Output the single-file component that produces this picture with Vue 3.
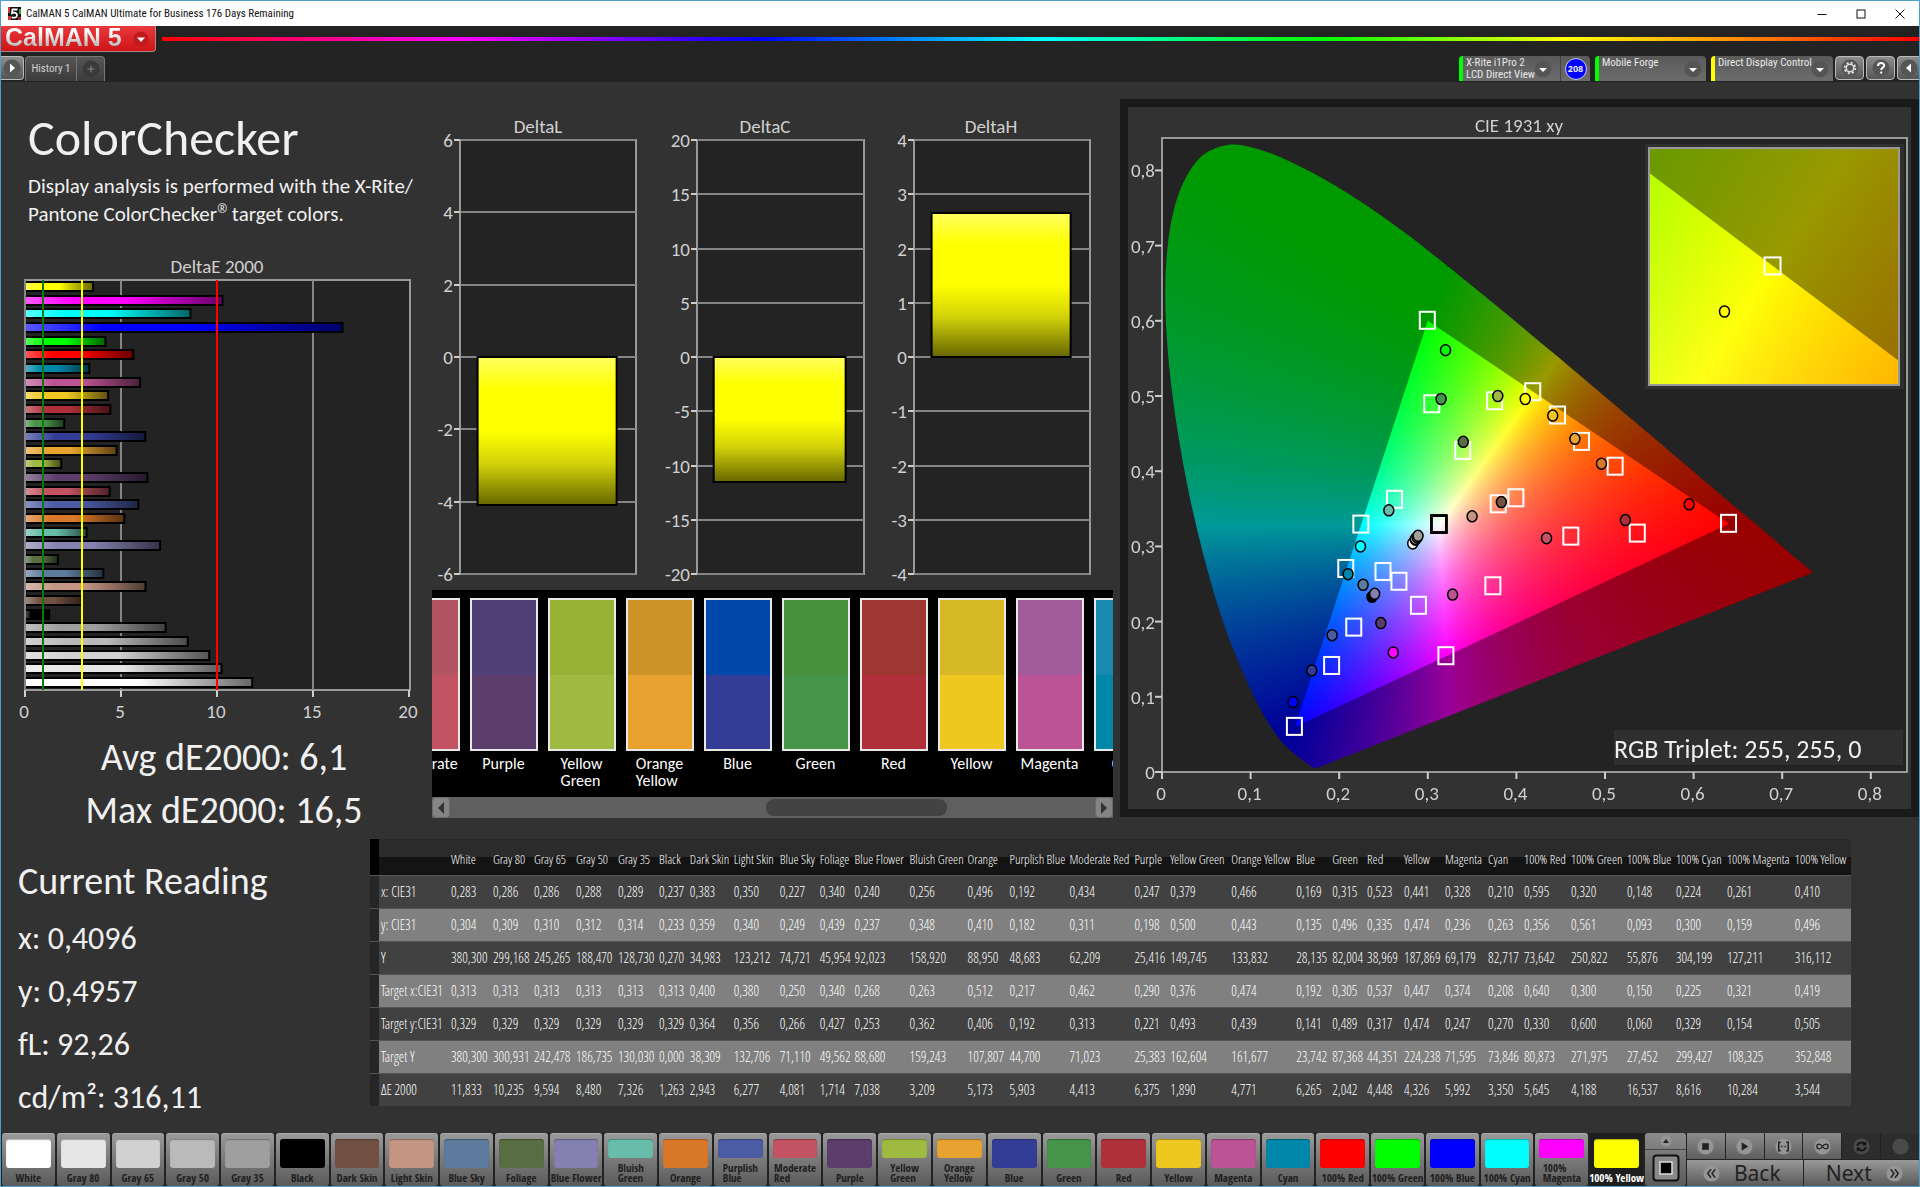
<script setup>
import { ref, onMounted } from 'vue'

const patches = [
  { name: 'White', color: '#ffffff', v: '0,283 0,304 380,300 0,313 0,329 380,300 11,833', w: 42 },
  { name: 'Gray 80', color: '#e6e6e6', v: '0,286 0,309 299,168 0,313 0,329 300,931 10,235', w: 41 },
  { name: 'Gray 65', color: '#d1d1d1', v: '0,286 0,310 245,265 0,313 0,329 242,478 9,594', w: 42 },
  { name: 'Gray 50', color: '#bababa', v: '0,288 0,312 188,470 0,313 0,329 186,735 8,480', w: 42 },
  { name: 'Gray 35', color: '#9f9f9f', v: '0,289 0,314 128,730 0,313 0,329 130,030 7,326', w: 41 },
  { name: 'Black', color: '#000000', v: '0,237 0,233 0,270 0,313 0,329 0,000 1,263', w: 31 },
  { name: 'Dark Skin', color: '#725143', v: '0,383 0,359 34,983 0,400 0,364 38,309 2,943', w: 44 },
  { name: 'Light Skin', color: '#c39582', v: '0,350 0,340 123,212 0,380 0,356 132,706 6,277', w: 46 },
  { name: 'Blue Sky', color: '#5d7b9d', v: '0,227 0,249 74,721 0,250 0,266 71,110 4,081', w: 40 },
  { name: 'Foliage', color: '#586d42', v: '0,340 0,439 45,954 0,340 0,427 49,562 1,714', w: 35 },
  { name: 'Blue Flower', color: '#8480b0', v: '0,240 0,237 92,023 0,268 0,253 88,680 7,038', w: 55 },
  { name: 'Bluish Green', color: '#67bdaa', v: '0,256 0,348 158,920 0,263 0,362 159,243 3,209', w: 58, two: true },
  { name: 'Orange', color: '#d97829', v: '0,496 0,410 88,950 0,512 0,406 107,807 5,173', w: 42 },
  { name: 'Purplish Blue', color: '#4b5ba4', v: '0,192 0,182 48,683 0,217 0,192 44,700 5,903', w: 60, two: true },
  { name: 'Moderate Red', color: '#c35362', v: '0,434 0,311 62,209 0,462 0,313 71,023 4,413', w: 65, two: true },
  { name: 'Purple', color: '#5d3d6b', v: '0,247 0,198 25,416 0,290 0,221 25,383 6,375', w: 36 },
  { name: 'Yellow Green', color: '#9fba40', v: '0,379 0,500 149,745 0,376 0,493 162,604 1,890', w: 61, two: true },
  { name: 'Orange Yellow', color: '#e7a22f', v: '0,466 0,443 133,832 0,474 0,439 161,677 4,771', w: 65, two: true },
  { name: 'Blue', color: '#343d96', v: '0,169 0,135 28,135 0,192 0,141 23,742 6,265', w: 36 },
  { name: 'Green', color: '#469449', v: '0,315 0,496 82,004 0,305 0,489 87,368 2,042', w: 35 },
  { name: 'Red', color: '#b03039', v: '0,523 0,335 38,969 0,537 0,317 44,351 4,448', w: 37 },
  { name: 'Yellow', color: '#eec821', v: '0,441 0,474 187,869 0,447 0,474 224,238 4,326', w: 41 },
  { name: 'Magenta', color: '#bb5395', v: '0,328 0,236 69,179 0,374 0,247 71,595 5,992', w: 43 },
  { name: 'Cyan', color: '#0086a8', v: '0,210 0,263 82,717 0,208 0,270 73,846 3,350', w: 36 },
  { name: '100% Red', color: '#ff0000', v: '0,595 0,356 73,642 0,640 0,330 80,873 5,645', w: 47 },
  { name: '100% Green', color: '#00ff00', v: '0,320 0,561 250,822 0,300 0,600 271,975 4,188', w: 56 },
  { name: '100% Blue', color: '#0000ff', v: '0,148 0,093 55,876 0,150 0,060 27,452 16,537', w: 49 },
  { name: '100% Cyan', color: '#00ffff', v: '0,224 0,300 304,199 0,225 0,329 299,427 8,616', w: 51 },
  { name: '100% Magenta', color: '#ff00ff', v: '0,261 0,159 127,211 0,321 0,154 108,325 10,284', w: 68, two: true },
  { name: '100% Yellow', color: '#ffff00', v: '0,410 0,496 316,112 0,419 0,505 352,848 3,544', w: 58 },
].map((p) => {
  const cells = p.v.split(' ')
  const n = cells.map((c) => Number(c.replace(',', '.')))
  return { ...p, cells, x: n[0], y: n[1], tx: n[3], ty: n[4], de: n[6] }
})

const rowNames = ['x: CIE31', 'y: CIE31', 'Y', 'Target x:CIE31', 'Target y:CIE31', 'Target Y', 'ΔE 2000']
const broken = (p) => (p.two ? p.name.replace(' ', '\n') : p.name)

/* DeltaE 2000 chart */
const deX = (v) => 24 + v * 19.2
const deBars = [...patches].reverse().map((p, i) => ({
  color: p.color,
  y: Math.round(32 + i * 13.65),
  w: p.de * 19.2,
}))

/* DeltaL, DeltaC and DeltaH charts */
const columns = [
  { title: 'DeltaL', cx: 107, x: 29, w: 176, max: 6, step: 2, value: -4.1 },
  { title: 'DeltaC', cx: 334, x: 266, w: 167, max: 20, step: 5, value: -11.5 },
  { title: 'DeltaH', cx: 560, x: 483, w: 176, max: 4, step: 1, value: 2.66 },
].map((c) => {
  const yOf = (v) => Math.round(275 - (v / c.max) * 217)
  const ticks = []
  for (let v = c.max; v >= -c.max; v -= c.step) ticks.push({ v, y: yOf(v) })
  const top = Math.min(yOf(c.value), yOf(0))
  return { ...c, ticks, top, h: Math.abs(yOf(c.value) - yOf(0)), bx: c.x + c.w * 0.1, bw: c.w * 0.79 }
})

const comparison = [
  ['Moderate\nRed', '#b05561', '#c35362'],
  ['Purple', '#504077', '#5d3d6b'],
  ['Yellow\nGreen', '#98b235', '#9fba40'],
  ['Orange\nYellow', '#cc9429', '#e7a22f'],
  ['Blue', '#0049ab', '#343d96'],
  ['Green', '#4a913e', '#469449'],
  ['Red', '#9e3632', '#b03039'],
  ['Yellow', '#d7b825', '#eec821'],
  ['Magenta', '#a25c9b', '#bb5395'],
  ['Cyan', '#1a89b0', '#0086a8'],
]

/* CIE 1931 diagram */
const W = 783
const H = 702
const px = (x) => 34 + x * 886
const py = (y) => 665 - y * 752
const ix = (x) => 645 + (x - 0.4193) * 5000
const iy = (y) => 159 - (y - 0.5053) * 4740
const cieTicks = [0, 1, 2, 3, 4, 5, 6, 7, 8].map((n) => ({ v: n / 10, t: n ? '0,' + n : '0' }))
const locus = [
  [0.1741, 0.005], [0.1726, 0.0048], [0.1689, 0.0069], [0.1644, 0.0109], [0.1566, 0.0177], [0.144, 0.0297],
  [0.1355, 0.0399], [0.1241, 0.0578], [0.1096, 0.0868], [0.0913, 0.1327], [0.0687, 0.2007], [0.0454, 0.295],
  [0.0235, 0.4127], [0.0082, 0.5384], [0.0039, 0.6548], [0.0139, 0.7502], [0.0389, 0.812], [0.0743, 0.8338],
  [0.1142, 0.8262], [0.1547, 0.8059], [0.1929, 0.7816], [0.2296, 0.7543], [0.2658, 0.7243], [0.3016, 0.6923],
  [0.3731, 0.6245], [0.4441, 0.5547], [0.5125, 0.4866], [0.5752, 0.4242], [0.627, 0.3725], [0.6658, 0.334],
  [0.6915, 0.3083], [0.719, 0.2809], [0.7347, 0.2653],
]
const gamut = [[0.64, 0.33], [0.3, 0.6], [0.15, 0.06]]
const canvas = ref(null)

function chroma(x, y, level) {
  const z = 1 - x - y
  const rgb = [
    3.2406 * x - 1.5372 * y - 0.4986 * z,
    -0.9689 * x + 1.8758 * y + 0.0415 * z,
    0.0557 * x - 0.204 * y + 1.057 * z,
  ].map((c) => Math.max(0, c))
  const m = Math.max(...rgb, 1e-6)
  return rgb.map((c) => (255 * level * c) / m)
}

function layer(level, x0, y0, sx, sy) {
  const c = document.createElement('canvas')
  c.width = W
  c.height = H
  const g = c.getContext('2d')
  const img = g.createImageData(W, H)
  for (let j = 0, k = 0; j < H; j++) {
    for (let i = 0; i < W; i++, k += 4) {
      const [r, gg, b] = chroma((i - x0) / sx, (y0 - j) / sy, level)
      img.data[k] = r
      img.data[k + 1] = gg
      img.data[k + 2] = b
      img.data[k + 3] = 255
    }
  }
  g.putImageData(img, 0, 0)
  return c
}

function tracePolygon(g, pts, fx, fy) {
  g.beginPath()
  pts.forEach(([x, y], i) => (i ? g.lineTo(fx(x), fy(y)) : g.moveTo(fx(x), fy(y))))
  g.closePath()
}

function traceLocus(g) {
  const p = locus.map(([x, y]) => [px(x), py(y)])
  g.beginPath()
  g.moveTo(...p[0])
  for (let i = 0; i < p.length - 1; i++) {
    const a = p[Math.max(i - 1, 0)]
    const b = p[i]
    const c = p[i + 1]
    const d = p[Math.min(i + 2, p.length - 1)]
    g.bezierCurveTo(
      b[0] + (c[0] - a[0]) / 6, b[1] + (c[1] - a[1]) / 6,
      c[0] - (d[0] - b[0]) / 6, c[1] - (d[1] - b[1]) / 6,
      c[0], c[1],
    )
  }
  g.closePath()
}

onMounted(() => {
  const g = canvas.value.getContext('2d')
  g.save()
  traceLocus(g)
  g.clip()
  g.drawImage(layer(0.6, 34, 665, 886, 752), 0, 0)
  tracePolygon(g, gamut, px, py)
  g.clip()
  g.drawImage(layer(1, 34, 665, 886, 752), 0, 0)
  g.restore()

  g.fillStyle = '#2f2f2f'
  g.fillRect(517, 37, 259, 245)
  g.save()
  g.beginPath()
  g.rect(521, 41, 250, 237)
  g.clip()
  const x0 = ix(0)
  const y0 = iy(0)
  g.drawImage(layer(0.6, x0, y0, 5000, 4740), 0, 0)
  tracePolygon(g, gamut, ix, iy)
  g.clip()
  g.drawImage(layer(1, x0, y0, 5000, 4740), 0, 0)
  g.restore()
})

const last = patches[patches.length - 1]
</script>

<template>
  <div class="window">
    <header class="titlebar">
      <svg class="app-icon" viewBox="0 0 13 13" aria-hidden="true">
        <rect width="13" height="13" fill="#111" />
        <path d="M0 0h2v6H0zM0 9h3v4H0z" fill="#d33" /><path d="M11 2h2v5h-2z" fill="#3a3" /><path d="M10 10h3v3h-3z" fill="#b22" />
        <path d="M9.500 2.500H4.500L4 6.200C6.500 5 9 5.800 9 8.200 9 10.600 6.500 11.200 3.500 10.300" fill="none" stroke="#fff" stroke-width="1.800" />
      </svg>
      <span class="app-title">CalMAN 5 CalMAN Ultimate for Business 176 Days Remaining</span>
      <button class="win-btn" aria-label="Minimize"><svg viewBox="0 0 10 10"><path d="M0.500 5.500h9" /></svg></button>
      <button class="win-btn" aria-label="Maximize"><svg viewBox="0 0 10 10"><rect x="1" y="1" width="8" height="8" /></svg></button>
      <button class="win-btn" aria-label="Close"><svg viewBox="0 0 10 10"><path d="M0.500 0.500l9 9M9.500 0.500l-9 9" /></svg></button>
    </header>

    <div class="brandbar">
      <button class="brand">
        <span class="brand-name">CalMAN 5</span>
        <svg class="brand-arrow" viewBox="0 0 16 16"><circle cx="8" cy="8" r="7.500" fill="#c01a1e" /><path d="M4 6.500h8l-4 4.500z" fill="#fff" /></svg>
      </button>
      <div class="rainbow"></div>
    </div>

    <nav class="toolbar">
      <button class="icon-btn flush-left" aria-label="Expand">
        <svg viewBox="0 0 18 18"><circle cx="9" cy="9" r="8.500" class="disc" /><path d="M7 4.500v9l5-4.500z" fill="#fff" /></svg>
      </button>
      <div class="tabs">
        <button class="tab">History 1</button>
        <button class="tab add" aria-label="Add tab">
          <svg viewBox="0 0 18 18"><circle cx="9" cy="9" r="8.500" fill="#3a3a3a" /><path d="M9 5.500v7M5.500 9h7" stroke="#888" /></svg>
        </button>
      </div>
      <div class="devices">
        <div class="device meter">
          <button class="device-main green"><span>X-Rite i1Pro 2<br />LCD Direct View</span>
            <svg viewBox="0 0 18 18"><circle cx="9" cy="9" r="8.500" class="disc" /><path d="M5 8h8l-4 4z" fill="#fff" /></svg>
          </button>
          <span class="badge-cell"><span class="badge">208</span></span>
        </div>
        <div class="device source">
          <button class="device-main green"><span>Mobile Forge</span>
            <svg viewBox="0 0 18 18"><circle cx="9" cy="9" r="8.500" class="disc" /><path d="M5 8h8l-4 4z" fill="#fff" /></svg>
          </button>
        </div>
        <div class="device display">
          <button class="device-main yellow"><span>Direct Display Control</span>
            <svg viewBox="0 0 18 18"><circle cx="9" cy="9" r="8.500" class="disc" /><path d="M5 8h8l-4 4z" fill="#fff" /></svg>
          </button>
        </div>
      </div>
      <button class="icon-btn" aria-label="Settings">
        <svg viewBox="0 0 18 18"><circle cx="9" cy="9" r="8.500" class="disc" /><circle cx="9" cy="9" r="3.800" fill="none" stroke="#ddd" stroke-width="1.600" /><circle cx="9" cy="9" r="5.400" fill="none" stroke="#ddd" stroke-width="1.800" stroke-dasharray="2.100 2.140" /></svg>
      </button>
      <button class="icon-btn" aria-label="Help">
        <svg viewBox="0 0 18 18"><circle cx="9" cy="9" r="8.500" class="disc" /><path d="M6 7c0-4 6.200-3.800 6.200-.6C12.200 8.600 9.200 8.600 9.200 11M9.200 12.400v2" fill="none" stroke="#fff" stroke-width="2" /></svg>
      </button>
      <button class="icon-btn flush-right" aria-label="Collapse">
        <svg viewBox="0 0 18 18"><circle cx="9" cy="9" r="8.500" class="disc" /><path d="M11 4.500v9L6 9z" fill="#fff" /></svg>
      </button>
    </nav>

    <main>
      <div class="top">
        <section class="summary">
          <h1>ColorChecker</h1>
          <p class="lead">Display analysis is performed with the X-Rite/<br />Pantone ColorChecker<sup>®</sup> target colors.</p>
          <svg class="chart delta-e" viewBox="0 0 430 480">
            <defs>
              <linearGradient id="shadeX">
                <stop offset="0" stop-color="#fff" stop-opacity=".35" />
                <stop offset=".25" stop-color="#fff" stop-opacity="0" />
                <stop offset=".5" stop-color="#000" stop-opacity="0" />
                <stop offset="1" stop-color="#000" stop-opacity=".6" />
              </linearGradient>
            </defs>
            <text x="216" y="23" text-anchor="middle">DeltaE 2000</text>
            <rect x="24" y="30" width="385" height="410" class="plot" />
            <path v-for="v in [5, 10, 15]" :key="v" :d="`M${deX(v)} 30v410`" class="grid" />
            <g v-for="(b, i) in deBars" :key="i">
              <rect x="24" :y="b.y" :width="b.w" height="9" :fill="b.color" />
              <rect x="24" :y="b.y" :width="b.w" height="9" fill="url(#shadeX)" stroke="#000" stroke-width="2" />
            </g>
            <path d="M24 30v410" class="grid" />
            <path d="M42 30v410" stroke="#0a7a0a" stroke-width="2" />
            <path d="M81 30v410" stroke="#ff0" stroke-width="2" />
            <path d="M216 30v410" stroke="#f00" stroke-width="2" />
            <g v-for="v in [0, 5, 10, 15, 20]" :key="v">
              <path :d="`M${deX(v)} 440v7`" class="tick" />
              <text :x="deX(v) - 1" y="468" text-anchor="middle">{{ v }}</text>
            </g>
          </svg>
          <div class="stats">
            <div>Avg dE2000: 6,1</div>
            <div>Max dE2000: 16,5</div>
          </div>
        </section>

        <section class="middle">
          <svg class="chart" viewBox="0 0 683 508">
            <defs>
              <linearGradient id="shadeY" x2="0" y2="1">
                <stop offset="0" stop-color="#ffff60" />
                <stop offset=".22" stop-color="#ffff00" />
                <stop offset=".5" stop-color="#ffff00" />
                <stop offset=".72" stop-color="#d2d20a" />
                <stop offset="1" stop-color="#666600" />
              </linearGradient>
            </defs>
            <g v-for="c in columns" :key="c.title">
              <text :x="c.cx" y="51" text-anchor="middle">{{ c.title }}</text>
              <rect :x="c.x" y="58" :width="c.w" height="434" class="plot" />
              <g v-for="t in c.ticks" :key="t.v">
                <path :d="`M${c.x} ${t.y}h${c.w}`" class="grid" />
                <path :d="`M${c.x - 6} ${t.y}h6`" class="tick" />
                <text :x="c.x - 7" :y="t.y + 7" text-anchor="end">{{ t.v }}</text>
              </g>
              <rect :x="c.bx" :y="c.top" :width="c.bw" :height="c.h" fill="url(#shadeY)" stroke="#000" stroke-width="2" />
            </g>
          </svg>
          <div class="compare">
            <div class="strip">
              <figure v-for="s in comparison" :key="s[0]">
                <div class="pair"><i :style="{ background: s[1] }"></i><i :style="{ background: s[2] }"></i></div>
                <figcaption>{{ s[0] }}</figcaption>
              </figure>
            </div>
            <div class="scrollbar">
              <button aria-label="Scroll left"><svg viewBox="0 0 8 12"><path d="M7 0v12L1 6z" /></svg></button>
              <div class="track"><div class="thumb"></div></div>
              <button aria-label="Scroll right"><svg viewBox="0 0 8 12"><path d="M1 0v12l6-6z" /></svg></button>
            </div>
          </div>
        </section>

        <section class="cie">
          <canvas ref="canvas" :width="W" :height="H"></canvas>
          <svg class="chart" :viewBox="`0 0 ${W} ${H}`">
            <text x="391" y="25" text-anchor="middle">CIE 1931 xy</text>
            <rect x="34" y="31" width="745" height="634" class="frame" />
            <g v-for="t in cieTicks" :key="t.t">
              <path :d="`M${px(t.v)} 665v7`" class="tick" />
              <text :x="px(t.v) - 1" y="693" text-anchor="middle">{{ t.t }}</text>
              <path :d="`M${27} ${py(t.v)}h7`" class="tick" />
              <text x="27" :y="py(t.v) + 7" text-anchor="end">{{ t.t }}</text>
            </g>
            <rect x="521" y="41" width="250" height="237" class="frame" />
            <rect
              v-for="(p, i) in patches" :key="'t' + i" :x="px(p.tx) - 8" :y="py(p.ty) - 9" width="15" height="17"
              fill="none" :stroke="i < 6 ? '#000' : '#fff'" stroke-width="2"
            />
            <ellipse
              v-for="(p, i) in patches" :key="'m' + i" :cx="px(p.x)" :cy="py(p.y)" rx="5" ry="5.500"
              :fill="p.color" stroke="#000" stroke-width="1.500"
            />
            <rect :x="ix(last.tx) - 7" :y="iy(last.ty) - 10" width="16" height="17" fill="none" stroke="#fff" stroke-width="2" />
            <ellipse :cx="ix(0.4096)" :cy="iy(0.4957)" rx="5" ry="5.500" fill="#ff0" stroke="#000" stroke-width="1.500" />
            <rect x="486" y="623" width="289" height="35" fill="#2f2f2f" />
            <text x="486" y="651" class="triplet">RGB Triplet: 255, 255, 0</text>
          </svg>
        </section>
      </div>

      <div class="bottom">
        <section class="reading">
          <h2>Current Reading</h2>
          <div>x: 0,4096</div>
          <div>y: 0,4957</div>
          <div>fL: 92,26</div>
          <div>cd/m²: 316,11</div>
        </section>
        <table>
          <colgroup>
            <col class="c-gutter" />
            <col class="c-name" />
            <col v-for="p in patches" :key="p.name" :style="{ width: (p.w / 14.8).toFixed(2) + '%' }" />
          </colgroup>
          <thead>
            <tr><th></th><th></th><th v-for="p in patches" :key="p.name" scope="col">{{ p.name }}</th></tr>
          </thead>
          <tbody>
            <tr v-for="(r, i) in rowNames" :key="r">
              <td></td><th scope="row">{{ r }}</th><td v-for="p in patches" :key="p.name">{{ p.cells[i] }}</td>
            </tr>
          </tbody>
        </table>
      </div>
    </main>

    <footer>
      <div class="patches">
        <button v-for="(p, i) in patches" :key="p.name" class="patch" :class="{ active: i === patches.length - 1 }">
          <i :style="{ background: p.color }"></i><span>{{ broken(p) }}</span>
        </button>
      </div>
      <div class="pattern">
        <button class="up" aria-label="More"><svg viewBox="0 0 12 12"><circle cx="6" cy="6" r="5.500" class="knob" /><path d="M3 8h6L6 4z" fill="#222" /></svg></button>
        <button class="window-size" aria-label="Pattern window">
          <svg viewBox="0 0 28 28"><rect x="1.500" y="1.500" width="25" height="25" rx="3" fill="#8a8a8a" stroke="#111" stroke-width="2" /><rect x="8" y="8" width="12" height="12" fill="#000" stroke="#ddd" stroke-width="1.500" /></svg>
        </button>
      </div>
      <div class="transport">
        <div class="keys">
          <button aria-label="Stop"><svg viewBox="0 0 18 18"><circle cx="9" cy="9" r="8.500" class="knob" /><path d="M5.500 5.500h7v7h-7z" fill="#222" /></svg></button>
          <button aria-label="Play"><svg viewBox="0 0 18 18"><circle cx="9" cy="9" r="8.500" class="knob" /><path d="M6 4.500v9l7-4.500z" fill="#222" /></svg></button>
          <button aria-label="Read series"><svg viewBox="0 0 18 18"><circle cx="9" cy="9" r="8.500" class="knob" /><path d="M6 4.500H4v9h2M12 4.500h2v9h-2M6.500 9h1.500M10 9h1.500" fill="none" stroke="#222" stroke-width="1.600" /></svg></button>
          <button aria-label="Read continuously"><svg viewBox="0 0 18 18"><circle cx="9" cy="9" r="8.500" class="knob" /><path d="M9 9c-1.500-2.200-2.500-2.500-3.500-2.500a2.500 2.500 0 0 0 0 5C6.500 11.500 7.500 11.200 9 9s2.500-2.500 3.500-2.500a2.500 2.500 0 0 1 0 5C11.500 11.500 10.500 11.200 9 9z" fill="none" stroke="#222" stroke-width="1.400" /></svg></button>
          <button class="off" aria-label="Refresh"><svg viewBox="0 0 18 18"><circle cx="9" cy="9" r="8.500" class="dim" /><path d="M4.500 8.500a4.500 4.500 0 0 1 8-2M13.500 9.500a4.500 4.500 0 0 1-8 2" fill="none" stroke="#151515" stroke-width="2" /><path d="M14 3.500v4.500H9.500zM4 14.500V10h4.500z" fill="#151515" /></svg></button>
          <button class="off" aria-label="Record"><svg viewBox="0 0 18 18"><circle cx="9" cy="9" r="8.500" class="dim" /></svg></button>
        </div>
        <div class="steps">
          <button class="back"><svg viewBox="0 0 18 18"><circle cx="9" cy="9" r="8.500" class="knob" /><path d="M8.500 4.500L5 9l3.500 4.500M13 4.500L9.500 9l3.500 4.500" fill="none" stroke="#222" stroke-width="1.500" /></svg>Back</button>
          <button class="next">Next<svg viewBox="0 0 18 18"><circle cx="9" cy="9" r="8.500" class="knob" /><path d="M5 4.500L8.500 9 5 13.500M9.500 4.500L13 9l-3.500 4.500" fill="none" stroke="#222" stroke-width="1.500" /></svg></button>
        </div>
      </div>
    </footer>
  </div>
</template>

<style>
body { margin: 0; background: #323232; }
</style>

<style scoped>
* { box-sizing: border-box; }
button { font: inherit; color: inherit; border: 0; padding: 0; margin: 0; background: none; }
svg { display: block; }
.window {
  min-height: 100vh; display: flex; flex-direction: column; border: 1px solid #4d9fd0; background: #323232; color: #f0f0f0;
  font-family: Carlito, Lato, sans-serif; overflow: hidden;
}
.titlebar { display: flex; align-items: center; height: 25px; background: #fff; color: #111; padding-left: 7px; }
.app-icon { width: 13px; height: 13px; }
.app-title { flex: 1; margin-left: 5px; font: 11px/16px "Roboto Condensed", sans-serif; }
.win-btn { width: 39px; height: 25px; display: grid; place-items: center; }
.win-btn svg { width: 10px; height: 10px; fill: none; stroke: #111; }

.brandbar { display: flex; background: #232323; height: 27px; }
.brand { display: flex; align-items: center; justify-content: space-between; width: 155px; height: 26px; padding: 0 6px 0 4px; background: linear-gradient(#e8393c, #cf1417); border: 1px solid #a88; border-top: 0; border-left: 0; border-radius: 0 0 4px 0; }
.brand-name { margin-top: -4px; font: bold 25px/24px "Liberation Sans", sans-serif; background: linear-gradient(#fff 30%, #a8a8a8); background-clip: text; color: transparent; }
.brand-arrow { width: 16px; height: 16px; }
.rainbow { flex: 1; height: 4px; margin: 11px 0 0 6px; background: linear-gradient(90deg, #f00, #f0f 17%, #00f 34%, #0ff 50%, #0f0 66%, #ff0 80%, #f80 90%, #f00); }

.toolbar { display: flex; align-items: flex-start; height: 29px; padding-top: 3px; background: #232323; font: 11px/12px "Roboto Condensed", sans-serif; color: #e8e8e8; }
.disc { fill: #555; }
.icon-btn { width: 29px; height: 24px; margin-left: 2px; display: grid; place-items: center; background: linear-gradient(#8c8c8c, #555); border: 1px solid #bbb; border-radius: 4px; }
.icon-btn svg { width: 18px; height: 18px; }
.flush-left { width: 23px; margin-left: 0; border-left: 0; border-radius: 0 4px 4px 0; }
.flush-right { width: 22px; border-right: 0; border-radius: 4px 0 0 4px; }
.tabs { display: flex; height: 25px; margin-left: 1px; background: linear-gradient(#555, #3c3c3c); border: 1px solid #777; border-bottom: 0; border-radius: 4px 4px 0 0; }
.tab { width: 50px; color: #d0d0d0; white-space: nowrap; }
.tab.add { width: 28px; display: grid; place-items: center; border-left: 1px solid #777; }
.add svg { width: 18px; height: 18px; }
.devices { flex: 1; display: flex; justify-content: flex-end; gap: 5px; }
.device { display: flex; height: 25px; background: linear-gradient(#5a5a5a, #6c6c6c); border-radius: 4px 4px 0 0; overflow: hidden; }
.device-main { display: flex; flex: 1; min-width: 0; text-align: left; border-left: 4px solid #0f0; padding: 1px 4px 0 3px; }
.device-main span { flex: 1; min-width: 0; white-space: nowrap; }
.device-main svg { flex: none; width: 18px; height: 18px; margin-top: 3px; }
.device .yellow { border-color: #ff0; }
.meter { width: 131px; }
.meter .device-main { padding-right: 8px; }
.source { width: 111px; }
.display { width: 122px; }
.badge-cell { width: 30px; display: grid; place-items: center; border-left: 1px solid #444; }
.badge { width: 22px; height: 22px; border: 1px solid #ccd; border-radius: 50%; background: #00f; font: bold 9px/20px "Open Sans", sans-serif; text-align: center; }

main { flex: 1; }
.top { display: grid; grid-template-columns: minmax(0, 430fr) minmax(0, 683fr) minmax(0, 805fr); align-items: start; }
.chart { width: 100%; }
.chart text { fill: #d0d0d0; font-size: 19px; }
.plot { fill: #232323; stroke: #999; stroke-width: 2; }
.frame { fill: none; stroke: #999; stroke-width: 2; }
.grid { stroke: #858585; stroke-width: 2; }
.tick { stroke: #ccc; stroke-width: 2; }

h1 { margin: 0; padding: 26px 0 0 27px; font-weight: 400; font-size: 50px; line-height: 60px; }
.lead { margin: 4px 0 0; padding-left: 27px; font-size: 21px; line-height: 28px; white-space: nowrap; }
.lead sup { font: 12px/0 "Open Sans", sans-serif; }
.delta-e { margin-top: 22px; }
.stats { padding: 1px 0 0 16px; text-align: center; font-size: 38px; line-height: 53px; white-space: nowrap; }

.compare { margin: 0 1px; background: #000; }
.strip { display: flex; justify-content: center; gap: 10px; height: 207px; padding: 8px 0 0 8px; overflow: hidden; }
figure { flex: none; width: 68px; margin: 0; text-align: center; }
.pair { height: 153px; border: 2px solid #e8e8e8; display: flex; flex-direction: column; }
.pair i { flex: 1; }
figcaption { display: inline-block; margin-top: 4px; text-align: left; white-space: pre; font-size: 16px; line-height: 17px; color: #fff; }
.scrollbar { display: flex; height: 21px; background: #5f5f5f; }
.scrollbar button { width: 18px; display: grid; place-items: center; background: #858585; border: 1px solid #6c6c6c; border-radius: 4px; }
.scrollbar svg { width: 8px; height: 12px; fill: #333; }
.track { flex: 1; padding: 2px 0; }
.thumb { width: 28%; height: 100%; margin-left: 49%; border-radius: 8px; background: #434343; }

.cie { display: grid; margin: 17px 0 0 6px; border: 8px solid #1a1a1a; background: #323232; }
.cie canvas, .cie svg { grid-area: 1 / 1; width: 100%; }
.cie canvas { background: linear-gradient(#232323, #232323) 34px 31px / 745px 634px no-repeat; }
.cie .triplet { font-size: 26px; fill: #f0f0f0; }

.bottom { display: grid; grid-template-columns: 369fr 1481fr 68fr; margin-top: 1px; align-items: start; }
.reading { padding: 17px 0 0 17px; font-size: 32px; line-height: 53px; white-space: nowrap; }
h2 { margin: 0 0 4px; font-weight: 400; font-size: 38px; line-height: 53px; }
table { width: 100%; margin-top: 1px; border-collapse: collapse; table-layout: fixed; font: 14px/16px "Open Sans Condensed Light", "Roboto Condensed", sans-serif; }
.c-gutter { width: 9px; }
.c-name { width: 70px; }
th, td { padding: 0 0 0 2px; text-align: left; font-weight: 400; white-space: nowrap; color: #fff; }
thead th { height: 36px; padding-top: 4px; font-size: 13px; background: linear-gradient(#2b2b2b 50%, #141414 50%); }
thead th:first-child { background: #000; }
tbody tr { height: 33px; background: #414141; border-top: 1px solid #555; }
tbody tr:nth-child(even) { background: #808080; }
tbody td:first-child { background: #262626; }

footer { display: flex; height: 53px; background: #232323; color: #1e1e1e; }
.patches { flex: 1; display: grid; grid-template-columns: repeat(30, minmax(0, 1fr)); gap: 2px; padding: 0 2px 0 1px; }
.patch { display: flex; flex-direction: column; align-items: center; min-width: 0; padding: 5px 4px 3px; border-radius: 3px; border-top: 1px solid #aaa; background: linear-gradient(#999, #5a5a5a); font: 700 11px/10px "Open Sans Condensed", sans-serif; }
.patch i { align-self: stretch; flex: 1; border-radius: 3px; box-shadow: inset 0 1px 1px rgba(0, 0, 0, 0.3); margin-bottom: 5px; }
.patch span { white-space: pre; text-align: left; }
.active { background: #1e1e1e; border-color: #1e1e1e; color: #fff; }
.knob { fill: #959595; }
.dim { fill: #4a4a4a; }
.pattern { width: 41px; display: flex; flex-direction: column; background: linear-gradient(#8c8c8c, #5a5a5a); border-radius: 3px; }
.up { height: 17px; display: grid; place-items: center; border-bottom: 1px solid #444; }
.up svg { width: 12px; height: 12px; }
.window-size { flex: 1; display: grid; place-items: center; }
.window-size svg { width: 28px; height: 28px; }
.transport { width: 232px; margin-left: 1px; display: flex; flex-direction: column; gap: 1px; }
.keys { display: grid; grid-template-columns: repeat(6, 1fr); gap: 1px; height: 26px; }
.keys button { display: grid; place-items: center; background: linear-gradient(#8c8c8c, #5f5f5f); }
.keys .off { background: #2d2d2d; }
.keys svg, .steps svg { width: 17px; height: 17px; }
.steps { flex: 1; display: grid; grid-template-columns: 1fr 1fr; gap: 1px; }
.steps button { display: flex; align-items: center; justify-content: center; gap: 14px; background: linear-gradient(#999, #5a5a5a); font: 21px/24px "Noto Sans", sans-serif; color: #222; }
.steps .back { padding-right: 6px; }
.steps .next { padding-left: 6px; }
</style>
